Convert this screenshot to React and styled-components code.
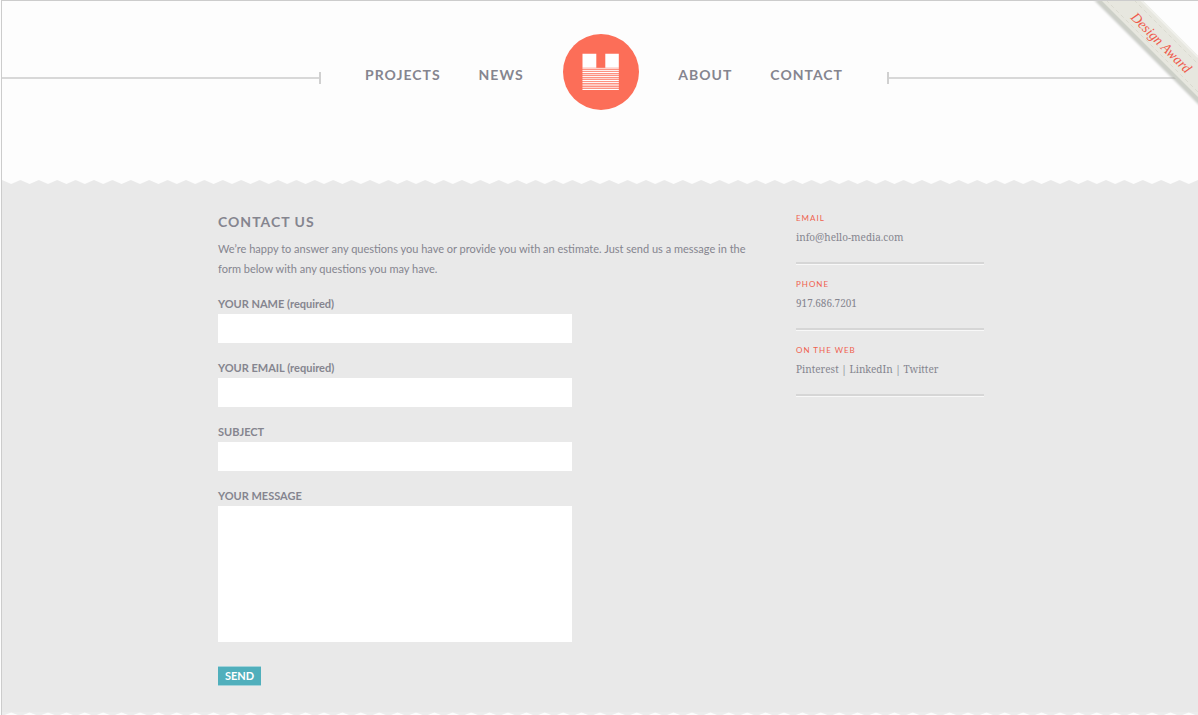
import React from "react";
import styled, { createGlobalStyle } from "styled-components";

const sans = '"Lato", "Open Sans", sans-serif';
const serif = '"Noto Serif", "Liberation Serif", serif';

const GlobalStyle = createGlobalStyle`
  * { box-sizing: border-box; }
  body {
    margin: 0;
    background: #fdfdfd;
    color: #85858f;
    font: 11px/20px ${sans};
  }
`;

const Page = styled.div`
  position: relative;
  display: flex;
  flex-direction: column;
  min-height: 100vh;
  margin-left: 1px;
  border-top: 1px solid #cccccc;
  border-left: 1px solid #cccccc;
  overflow: hidden;
`;

const Header = styled.header`
  display: grid;
  grid-template-columns: calc(50% - 279px) auto 1fr;
  align-items: center;
  padding: 33px 0 70px;
`;

const Rule = styled.div`
  height: 12px;
  margin-top: 12px;
  border: 0 solid #d0d0d0;
  border-left-width: ${(p) => (p.$side === "right" ? "2px" : "0")};
  border-right-width: ${(p) => (p.$side === "left" ? "2px" : "0")};
  background: linear-gradient(#d8d8d8, #d8d8d8) center / 100% 2px no-repeat;
`;

const Nav = styled.nav`
  display: flex;
  align-items: center;
  justify-content: space-between;
  width: 566px;
  padding: 0 44px;
`;

const NavGroup = styled.div`
  display: flex;
  gap: 38px;
  padding-top: 6px;
`;

const NavLink = styled.a`
  color: #85858f;
  font-size: 14px;
  font-weight: 700;
  letter-spacing: 1px;
  text-decoration: none;
`;

const LogoLink = styled.a`
  display: block;
  height: 76px;
`;

const Ribbon = styled.svg`
  position: absolute;
  top: 0;
  right: 0;
`;

const RibbonText = styled.text`
  fill: #ef5a4c;
  font: italic 14px "Liberation Serif", serif;
`;

const Main = styled.main`
  flex: 1;
  background: #e9e9e9;
`;

const Edge = styled.svg`
  display: block;
  width: 100%;
  height: ${(p) => p.$height}px;
  background: #fdfdfd;
`;

const Columns = styled.div`
  display: flex;
  justify-content: space-between;
  align-items: flex-start;
  max-width: 768px;
  margin: 0 auto;
  padding: 26px 0 26px 2px;
`;

const Content = styled.section`
  width: 540px;
`;

const Title = styled.h1`
  margin: 0 0 5px;
  font-size: 14px;
  line-height: 24px;
  font-weight: 700;
  letter-spacing: 1px;
`;

const Intro = styled.p`
  margin: 0 0 15px;
`;

const Form = styled.form`
  display: flex;
  flex-direction: column;
  align-items: flex-start;
  gap: 15px;
`;

const Field = styled.div`
  width: 354px;
`;

const Label = styled.label`
  display: block;
  font-weight: 700;
`;

const Input = styled.input`
  display: block;
  width: 100%;
  height: 29px;
  padding: 4px 8px;
  border: 0;
  border-radius: 0;
  background: #ffffff;
  color: inherit;
  font: inherit;
`;

const Message = styled(Input)`
  height: 136px;
  resize: none;
`;

const SendButton = styled.button`
  height: 20px;
  margin-top: 9px;
  padding: 0 7px;
  border: 0 solid #a3d3da;
  border-width: 1px 0;
  background: #50afbc;
  color: #ffffff;
  font: 700 11px/18px ${sans};
`;

const Sidebar = styled.aside`
  display: flex;
  flex-direction: column;
  gap: 12px;
  width: 188px;
`;

const Detail = styled.section`
  padding-bottom: 15px;
  border-bottom: 2px solid #d6d6d6;
  box-shadow: 0 1px 0 #f8f8f8;
`;

const DetailTitle = styled.h2`
  margin: 0;
  color: #f0614f;
  font-size: 8px;
  line-height: 17px;
  font-weight: 400;
  letter-spacing: 1px;
`;

const DetailText = styled.p`
  margin: 0;
  font: 10px/20px ${serif};
`;

const DetailLink = styled.a`
  color: inherit;
  text-decoration: none;
`;

const stripes = [
  [68, 0.6, 1], [70, 0.85, 1], [72, 1, 1], [74, 0.6, 1], [76, 0.9, 1],
  [78, 0.6, 1], [80, 1, 1], [82, 0.9, 1], [84, 0.5, 2], [87, 0.6, 1], [89, 1, 1],
];

function Logo() {
  return (
    <svg width="76" height="76" viewBox="564 34 76 76" role="img" aria-label="Hello Media">
      <circle cx="602" cy="72" r="38" fill="#fc6e58" />
      <path d="M583.5 53.7h13.8v14h-13.8zM606.3 53.7h13.5v14h-13.5z" fill="#fff" />
      <path d="M583.5 67.5h36.3V90h-36.3z" fill="#fff" opacity=".25" />
      {stripes.map(([y, opacity, h]) => (
        <rect key={y} x="583.5" y={y} width="36.3" height={h} fill="#fff" opacity={opacity} />
      ))}
    </svg>
  );
}

function ZigZag({ id, height, flip }) {
  return (
    <Edge $height={height} aria-hidden="true">
      <defs>
        <pattern id={id} width="18.4" height="4" patternUnits="userSpaceOnUse">
          <path d={flip ? "M0 0H18.4V4L9.2 0.5L0 4Z" : "M0 4V0L9.2 4L18.4 0V4Z"} fill={flip ? "#ececec" : "#e9e9e9"} />
        </pattern>
      </defs>
      <rect width="100%" height="100%" fill={`url(#${id})`} />
    </Edge>
  );
}

function AwardRibbon() {
  return (
    <Ribbon width="108" height="110" viewBox="1090 1 108 110">
      <defs>
        <filter id="soft"><feGaussianBlur stdDeviation="1" /></filter>
      </defs>
      <path d="M1094 0L1200 106V100L1100 0Z" fill="#aaada5" opacity=".6" filter="url(#soft)" />
      <path d="M1097 0L1198 101V56L1142 0Z" fill="#cdd0c8" />
      <path d="M1101 0L1198 97V56L1142 0Z" fill="#e7e7df" />
      <path d="M1141 0L1198 57" stroke="#f1f1ec" strokeWidth="2" />
      <path d="M1106 0L1198 92M1134 0L1198 64" stroke="#dadad0" strokeDasharray="4 3" />
      <RibbonText transform="translate(1130 18) rotate(45)">Design Award</RibbonText>
    </Ribbon>
  );
}

export default function App() {
  return (
    <>
      <GlobalStyle />
      <Page>
        <Header>
          <Rule $side="left" />
          <Nav>
            <NavGroup>
              <NavLink href="#projects">PROJECTS</NavLink>
              <NavLink href="#news">NEWS</NavLink>
            </NavGroup>
            <LogoLink href="#home"><Logo /></LogoLink>
            <NavGroup>
              <NavLink href="#about">ABOUT</NavLink>
              <NavLink href="#contact">CONTACT</NavLink>
            </NavGroup>
          </Nav>
          <Rule $side="right" />
        </Header>
        <ZigZag id="edge-top" height={4} />
        <Main>
          <Columns>
            <Content>
              <Title>CONTACT US</Title>
              <Intro>
                We’re happy to answer any questions you have or provide you with an estimate. Just send us a message in the
                form below with any questions you may have.
              </Intro>
              <Form onSubmit={(e) => e.preventDefault()}>
                <Field>
                  <Label htmlFor="name">YOUR NAME (required)</Label>
                  <Input id="name" type="text" />
                </Field>
                <Field>
                  <Label htmlFor="email">YOUR EMAIL (required)</Label>
                  <Input id="email" type="email" />
                </Field>
                <Field>
                  <Label htmlFor="subject">SUBJECT</Label>
                  <Input id="subject" type="text" />
                </Field>
                <Field>
                  <Label htmlFor="message">YOUR MESSAGE</Label>
                  <Message as="textarea" id="message" />
                </Field>
                <SendButton type="submit">SEND</SendButton>
              </Form>
            </Content>
            <Sidebar>
              <Detail>
                <DetailTitle>EMAIL</DetailTitle>
                <DetailText><DetailLink href="mailto:info@hello-media.com">info@hello-media.com</DetailLink></DetailText>
              </Detail>
              <Detail>
                <DetailTitle>PHONE</DetailTitle>
                <DetailText>917.686.7201</DetailText>
              </Detail>
              <Detail>
                <DetailTitle>ON THE WEB</DetailTitle>
                <DetailText>
                  <DetailLink href="#pinterest">Pinterest</DetailLink> | <DetailLink href="#linkedin">LinkedIn</DetailLink> | <DetailLink href="#twitter">Twitter</DetailLink>
                </DetailText>
              </Detail>
            </Sidebar>
          </Columns>
        </Main>
        <ZigZag id="edge-bottom" height={3} flip />
        <AwardRibbon />
      </Page>
    </>
  );
}
